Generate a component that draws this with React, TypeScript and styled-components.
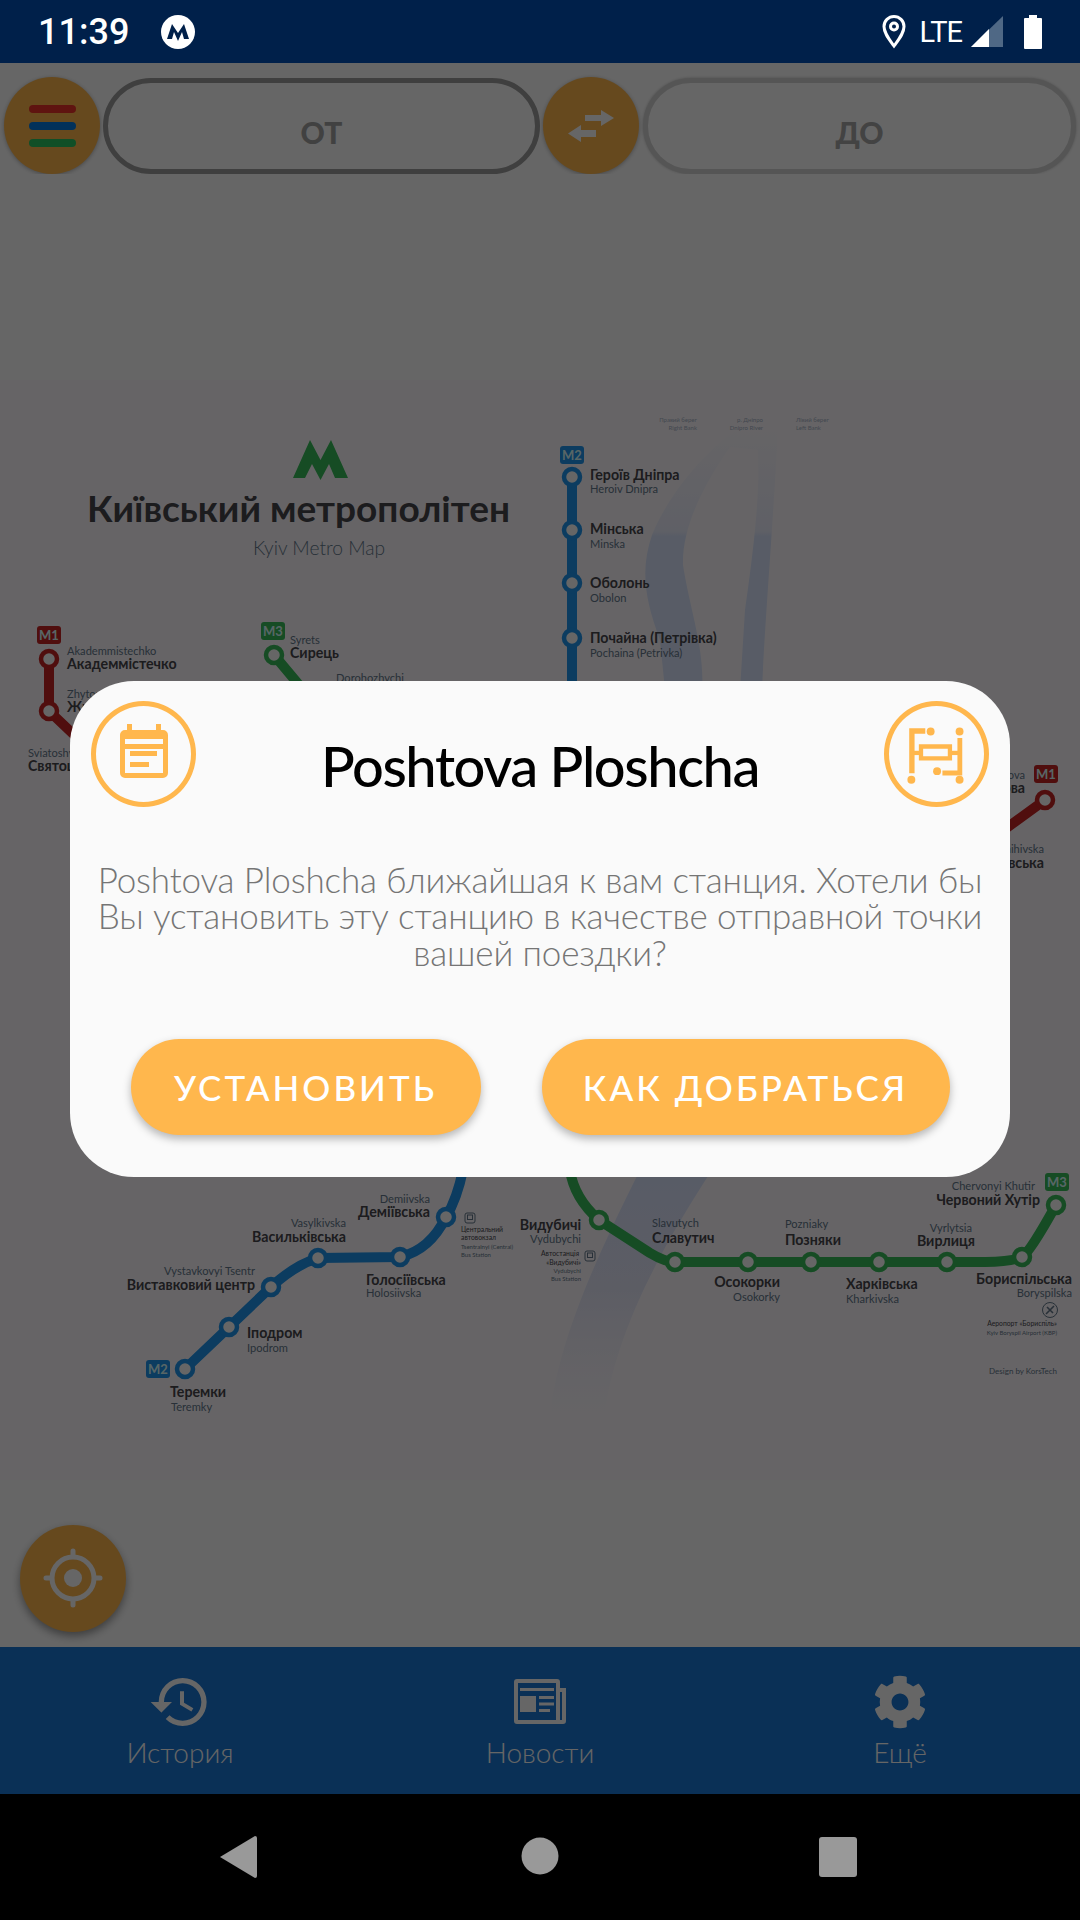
import React from "react";
import styled, { createGlobalStyle } from "styled-components";
import { MdHistory } from "react-icons/md";
import { FaCog } from "react-icons/fa";

const Global = createGlobalStyle`
  html, body { margin: 0; padding: 0; width: 1080px; height: 1920px; overflow: hidden; background: #000; }
  * { box-sizing: border-box; }
`;

const FONT = `Lato, "Noto Sans", "Liberation Sans", sans-serif`;

const Page = styled.div`
  width: 1080px; height: 1920px; display: flex; flex-direction: column; font-family: ${FONT};
`;
const StatusBar = styled.div`
  height: 63px; flex: none; background: #00204a; color: #fff; display: flex; align-items: center; padding: 0 38px 0 38px;
`;
const Clock = styled.span`
  font-family: Roboto, sans-serif; font-size: 36px; font-weight: 500; width: 123px;
`;
const StatusRight = styled.div`
  margin-left: auto; display: flex; align-items: center;
`;
const Lte = styled.span`
  font-family: Roboto, sans-serif; font-size: 29px; letter-spacing: -1px; margin: 0 9px 0 13px;
`;
const Content = styled.div`
  position: relative; flex: 1; display: flex; flex-direction: column; min-height: 0;
`;
const Main = styled.div`
  position: relative; flex: 1; background: #fff; display: flex; flex-direction: column; min-height: 0;
`;
const Toolbar = styled.div`
  flex: none; display: flex; align-items: center; padding: 14px 0 0 4px; height: 111px;
`;
const RoundButton = styled.button`
  flex: none; width: 96px; height: 97px; border: none; padding: 0; border-radius: 50%; background: #ffb74d;
  display: flex; flex-direction: column; align-items: center; justify-content: center; gap: 9px;
  box-shadow: 0 1px 4px rgba(0,0,0,.3);
`;
const MenuBar = styled.span<{ $c: string }>`
  width: 47px; height: 8px; border-radius: 4px; background: ${p => p.$c};
`;
const RouteField = styled.div<{ $w: number; $ml: number; $border: string; $color: string }>`
  flex: none; width: ${p => p.$w}px; height: 96px; margin-left: ${p => p.$ml}px; border-radius: 48px;
  border: 5px solid ${p => p.$border}; color: ${p => p.$color}; font-size: 30px; font-weight: 900;
  display: flex; align-items: center; justify-content: center; padding-top: 12px; background: #fff;
`;
const SoftField = styled(RouteField)`
  box-shadow: 0 0 3px rgba(0,0,0,.25);
`;
const SwapButton = styled(RoundButton)`
  margin-left: 3px;
`;
const MapSvg = styled.svg`
  flex: 1; width: 1080px; min-height: 0; display: block;
`;
const Fab = styled.button`
  position: absolute; left: 20px; bottom: 15px; width: 106px; height: 107px; border-radius: 50%; border: none; padding: 0;
  background: #ffb74d; box-shadow: 0 4px 8px rgba(0,0,0,.4); display: flex; align-items: center; justify-content: center;
`;
const BottomNav = styled.nav`
  flex: none; height: 147px; background: #1978d7; display: grid; grid-template-columns: repeat(3, 1fr);
`;
const NavItem = styled.div`
  display: flex; flex-direction: column; align-items: center; color: #fff; font-size: 28px; font-weight: 300;
`;
const NavIcon = styled.div`
  height: 64px; margin-top: 23px; display: flex; align-items: center; justify-content: center;
`;
const NavLabel = styled.span`
  margin-top: 0; line-height: 36px;
`;
const Scrim = styled.div`
  position: absolute; inset: 0; background: rgba(0,0,0,.6); display: flex; align-items: center; justify-content: center;
`;
const Dialog = styled.div`
  width: 940px; height: 496px; border-radius: 64px; background: #fafafa; padding: 20px 21px 0; display: flex; flex-direction: column;
`;
const DialogHead = styled.div`
  display: flex; align-items: center; justify-content: space-between;
`;
const Badge = styled.div`
  flex: none; width: 105px; height: 106px; border-radius: 50%; border: 5px solid #ffb74d; display: flex; align-items: center; justify-content: center;
`;
const Title = styled.h1`
  margin: 0; padding-top: 24px; font-size: 56px; font-weight: 500; color: #000; letter-spacing: -1.4px; line-height: 66px;
`;
const Body = styled.p`
  margin: 54px 0 0; font-size: 35px; font-weight: 300; color: #757575; line-height: 36.7px; text-align: center; letter-spacing: -0.13px;
`;
const Actions = styled.div`
  display: flex; justify-content: center; gap: 61px; margin-top: 68px;
`;
const Action = styled.button<{ $w: number }>`
  width: ${p => p.$w}px; height: 96px; border: none; border-radius: 48px; background: #ffb74d; color: #fff;
  font-family: ${FONT}; font-size: 35px; font-weight: 500; letter-spacing: 3px; box-shadow: 0 4px 8px rgba(0,0,0,.28); padding: 0;
`;
const SystemNav = styled.div`
  flex: none; height: 126px; background: #000; display: grid; grid-template-columns: 1fr; align-items: center;
`;
const SysSvg = styled.svg`
  width: 1080px; height: 126px; display: block;
`;

const Name = styled.text`
  font-family: ${FONT}; font-size: 14.2px; font-weight: 700; fill: #48464d;
`;
const Sub = styled.text`
  font-family: ${FONT}; font-size: 11.1px; font-weight: 400; fill: #64788c;
`;
const Tiny = styled.text<{ $size: number; $fill: string }>`
  font-family: ${FONT}; font-size: ${p => p.$size}px; font-weight: 400; fill: ${p => p.$fill};
`;
const MapTitle = styled.text`
  font-family: ${FONT}; font-size: 37px; font-weight: 700; fill: #48464d;
`;
const MapSubtitle = styled.text`
  font-family: ${FONT}; font-size: 19.2px; font-weight: 300; fill: #64788c;
`;
const LineBadgeText = styled.text`
  font-family: ${FONT}; font-size: 13px; font-weight: 700; fill: #dff;
`;

type L = [string, number, number, ("start" | "end")?];
const names: L[] = [
  ["Героїв Дніпра", 590, 480], ["Мінська", 590, 534], ["Оболонь", 590, 588], ["Почайна (Петрівка)", 590, 643],
  ["Академмістечко", 67, 669], ["Житомирська", 67, 712], ["Святошин", 28, 771], ["Сирець", 290, 658],
  ["Лісова", 1025, 793, "end"], ["Чернігівська", 1044, 868, "end"],
  ["Теремки", 170, 1397], ["Іподром", 247, 1338], ["Виставковий центр", 255, 1290, "end"], ["Васильківська", 346, 1242, "end"],
  ["Голосіївська", 366, 1285], ["Деміївська", 430, 1217, "end"], ["Видубичі", 581, 1230, "end"],
  ["Славутич", 652, 1243], ["Осокорки", 780, 1287, "end"], ["Позняки", 785, 1245], ["Харківська", 846, 1289],
  ["Вирлиця", 975, 1246, "end"], ["Бориспільська", 1072, 1284, "end"], ["Червоний Хутір", 1040, 1205, "end"],
];
const subs: L[] = [
  ["Heroiv Dnipra", 590, 493], ["Minska", 590, 548], ["Obolon", 590, 602], ["Pochaina (Petrivka)", 590, 657],
  ["Akademmistechko", 67, 655], ["Zhytomyrska", 67, 698], ["Sviatoshyn", 28, 757], ["Syrets", 290, 644], ["Dorohozhychi", 336, 682],
  ["Lisova", 1025, 779, "end"], ["Chernihivska", 1044, 853, "end"],
  ["Teremky", 171, 1411], ["Ipodrom", 247, 1352], ["Vystavkovyi Tsentr", 255, 1275, "end"], ["Vasylkivska", 346, 1227, "end"],
  ["Holosiivska", 366, 1297], ["Demiivska", 430, 1203, "end"], ["Vydubychi", 581, 1243, "end"],
  ["Slavutych", 652, 1227], ["Osokorky", 780, 1301, "end"], ["Pozniaky", 785, 1228], ["Kharkivska", 846, 1303],
  ["Vyrlytsia", 972, 1232, "end"], ["Boryspilska", 1072, 1297, "end"], ["Chervonyi Khutir", 1035, 1190, "end"],
];
const tinyDark: L[] = [
  ["Центральний", 461, 1232], ["автовокзал", 461, 1240], ["Автостанція", 579, 1256, "end"], ["«Видубичі»", 581, 1265, "end"],
  ["Аеропорт «Бориспіль»", 1057, 1326, "end"],
];
const tinyLight: L[] = [
  ["Tsentralnyi (Central)", 461, 1249], ["Bus Station", 461, 1257], ["Vydubychi", 581, 1273, "end"], ["Bus Station", 581, 1281, "end"],
  ["Kyiv Boryspil Airport (KBP)", 1057, 1335, "end"],
];
const riverLabels: L[] = [
  ["Правий берег", 697, 422, "end"], ["Right Bank", 697, 430, "end"], ["р. Дніпро", 763, 422, "end"], ["Dnipro River", 763, 430, "end"],
  ["Лівий берег", 796, 422], ["Left Bank", 796, 430],
];

const BLUE = "#1e96f0", GREEN = "#37be5a", RED = "#c82323";
const st = {
  blue: [[572, 477], [572, 530], [572, 583], [572, 638], [185, 1369], [229, 1327], [271, 1287], [318, 1258], [400, 1257], [446, 1217]],
  green: [[274, 655], [599, 1220], [675, 1262], [748, 1262], [811, 1262], [879, 1262], [947, 1262], [1022, 1257], [1056, 1205]],
  red: [[49, 659], [49, 711], [1045, 800]],
};

const MapBadge = ({ x, y, c, t }: { x: number; y: number; c: string; t: string }) => (
  <g>
    <rect x={x} y={y} width={24} height={18} rx={3} fill={c} />
    <LineBadgeText x={x + 12} y={y + 14} textAnchor="middle">{t}</LineBadgeText>
  </g>
);
const Bus = ({ x, y }: { x: number; y: number }) => (
  <g fill="none" stroke="#64788c" strokeWidth={1}>
    <rect x={x - 5} y={y - 5} width={10} height={10} rx={2} />
    <rect x={x - 2.5} y={y - 3} width={5} height={4.5} />
  </g>
);

const MetroMap = () => (
  <MapSvg viewBox="0 174 1080 1473" preserveAspectRatio="none">
    <defs>
      <linearGradient id="riverTop" x1="0" y1="0" x2="0" y2="1">
        <stop offset="0" stopColor="#e8ecff" stopOpacity="0" />
        <stop offset="0.4" stopColor="#e8ecff" stopOpacity="0.75" />
        <stop offset="0.42" stopColor="#dce6ff" />
        <stop offset="1" stopColor="#dce6ff" />
      </linearGradient>
      <linearGradient id="riverBottom" x1="0" y1="0" x2="0" y2="1">
        <stop offset="0" stopColor="#dce6ff" />
        <stop offset="0.45" stopColor="#e6e8fb" />
        <stop offset="1" stopColor="#f9f4fd" stopOpacity="0" />
      </linearGradient>
    </defs>
    <rect x="0" y="174" width="1080" height="1473" fill="#ffffff" />
    <rect x="0" y="380" width="1080" height="1100" fill="#fffbff" />
    <path fill="url(#riverTop)" d="M745 425 C715 440 670 490 652 535 C640 570 645 600 660 640 L665 690 L702 690 C705 650 690 610 683 565 C682 530 700 490 730 447 L758 450 C760 490 755 540 745 610 L740 690 L762 690 C765 620 772 540 778 430 Z" />
    <path fill="url(#riverBottom)" d="M640 1170 C590 1270 555 1350 548 1430 L603 1430 C610 1340 660 1250 712 1170 Z" />

    <g fill="#37be5a">
      <polygon points="293,478 310,440 320.5,460 331,440 348,478 335,478 329,464 320.5,480 312,464 305,478" />
    </g>
    <MapTitle x={87} y={522}>Київський метрополітен</MapTitle>
    <MapSubtitle x={319} y={555} textAnchor="middle">Kyiv Metro Map</MapSubtitle>

    <g fill="none" strokeWidth={10} strokeLinecap="round" strokeLinejoin="round">
      <path stroke={BLUE} d="M572 477 L572 700" />
      <path stroke={BLUE} d="M463 1170 Q457 1199 446 1217 Q430 1250 400 1257 L318 1258 Q295 1265 271 1287 L185 1369" />
      <path stroke={GREEN} d="M274 655 L320 710" />
      <path stroke={GREEN} d="M570 1170 Q574 1198 599 1220 L650 1253 Q665 1262 675 1262 L985 1262 Q1010 1262 1022 1257 Q1030 1252 1056 1205" />
      <path stroke={RED} d="M49 659 L49 711 L90 750" />
      <path stroke={RED} d="M1045 800 L990 840" />
    </g>
    <g stroke={BLUE} strokeWidth={4.5} fill="#fff">{st.blue.map(([x, y], i) => <circle key={i} cx={x} cy={y} r={8} />)}</g>
    <g stroke={GREEN} strokeWidth={4.5} fill="#fff">{st.green.map(([x, y], i) => <circle key={i} cx={x} cy={y} r={8} />)}</g>
    <g stroke={RED} strokeWidth={4.5} fill="#fff">{st.red.map(([x, y], i) => <circle key={i} cx={x} cy={y} r={8} />)}</g>

    <MapBadge x={560} y={446} c={BLUE} t="M2" />
    <MapBadge x={146} y={1360} c={BLUE} t="M2" />
    <MapBadge x={37} y={626} c={RED} t="M1" />
    <MapBadge x={1034} y={765} c={RED} t="M1" />
    <MapBadge x={261} y={622} c={GREEN} t="M3" />
    <MapBadge x={1045} y={1173} c={GREEN} t="M3" />

    {names.map(([t, x, y, a], i) => <Name key={i} x={x} y={y} textAnchor={a ?? "start"}>{t}</Name>)}
    {subs.map(([t, x, y, a], i) => <Sub key={i} x={x} y={y} textAnchor={a ?? "start"}>{t}</Sub>)}
    {tinyDark.map(([t, x, y, a], i) => <Tiny $size={6.8} $fill="#48464d" key={i} x={x} y={y} textAnchor={a ?? "start"}>{t}</Tiny>)}
    {tinyLight.map(([t, x, y, a], i) => <Tiny $size={6} $fill="#64788c" key={i} x={x} y={y} textAnchor={a ?? "start"}>{t}</Tiny>)}
    {riverLabels.map(([t, x, y, a], i) => <Tiny $size={6} $fill="#a9b4c8" key={i} x={x} y={y} textAnchor={a ?? "start"}>{t}</Tiny>)}
    <Tiny $size={8} $fill="#64788c" x={1057} y={1374} textAnchor="end">Design by KorsTech</Tiny>
    <Bus x={470} y={1218} />
    <Bus x={590} y={1256} />
    <g fill="none" stroke="#64788c" strokeWidth={1}>
      <circle cx={1050} cy={1310} r={7.5} />
      <path d="M1046 1314 L1054 1306 M1047 1307 L1053 1313" strokeWidth={1.6} />
    </g>
  </MapSvg>
);

const Logo = () => (
  <svg width="34" height="34" viewBox="0 0 34 34" style={{ flex: "none" }}>
    <circle cx="17" cy="17" r="17" fill="#fff" />
    <polygon points="6,24 11,9 17,18 23,9 28,24 23,24 21,17 17,26 13,17 11,24" fill="#00204a" />
  </svg>
);

const SwapIcon = () => (
  <svg width="96" height="97" viewBox="0 0 96 97" fill="#fff">
    <path d="M42 38 H58 V33 L71 41 L58 49 V44 H42 Z" />
    <path d="M53 53 H38 V48 L25 56.5 L38 65 V60 H53 Z" />
  </svg>
);

const CalendarIcon = () => (
  <svg width="50" height="60" viewBox="0 0 50 60" fill="#ffb74d">
    <rect x="8" y="0" width="5" height="8" />
    <rect x="37" y="0" width="5" height="8" />
    <path fillRule="evenodd" d="M6 6 H44 A5 5 0 0 1 49 11 V49 A5 5 0 0 1 44 54 H6 A5 5 0 0 1 1 49 V11 A5 5 0 0 1 6 6 Z M6 15 V20 H44 V15 Z M6 25 V49 H44 V25 Z" />
    <rect x="11" y="27" width="27" height="5" />
    <rect x="11" y="38" width="19" height="5" />
  </svg>
);

const CircuitIcon = () => (
  <svg width="60" height="60" viewBox="910 724 54 56" fill="#ffb74d">
    <path d="M912 728 H927 V733 H917 V770 H912 Z" />
    <path d="M957 737 H961.5 V772 H943 V767.5 H957 Z" />
    <circle cx="932" cy="731" r="3.7" /><circle cx="959" cy="731" r="3.7" />
    <circle cx="938" cy="768" r="3.7" /><circle cx="914" cy="776" r="3.7" /><circle cx="959" cy="776" r="3.7" />
    <path fillRule="evenodd" d="M921 743 H952 V758 H921 Z M925 747 V754 H948 V747 Z" />
    <rect x="916" y="749" width="6" height="4" /><rect x="951" y="749" width="7" height="4" />
  </svg>
);

const NewsIcon = () => (
  <svg width="52" height="46" viewBox="514 1680 52 46" fill="#fff">
    <path fillRule="evenodd" d="M517 1680 H557 A3 3 0 0 1 560 1683 V1689 H566 V1722 A3 3 0 0 1 563 1725 H517 A3 3 0 0 1 514 1722 V1683 A3 3 0 0 1 517 1680 Z M518 1684 V1721 H556 V1684 Z M560 1693 V1721 H562 V1693 Z" />
    <rect x="520" y="1689" width="34" height="3" />
    <rect x="520" y="1697" width="16" height="16" />
    <rect x="539" y="1697" width="15" height="3" />
    <rect x="539" y="1703.5" width="15" height="3" />
    <rect x="539" y="1710" width="11" height="3" />
  </svg>
);

const TargetIcon = () => (
  <svg width="106" height="107" viewBox="0 0 106 107" fill="none" stroke="#fff">
    <circle cx="53" cy="53" r="21" strokeWidth="5" />
    <circle cx="53" cy="53" r="9" fill="#fff" stroke="none" />
    <path strokeWidth="5" strokeLinecap="round" d="M53 26 V31 M53 75 V80 M26 53 H31 M75 53 H80" />
  </svg>
);

export default function App() {
  return (
    <Page>
      <Global />
      <StatusBar>
        <Clock>11:39</Clock>
        <Logo />
        <StatusRight>
          <svg width="24" height="34" viewBox="0 0 24 34" fill="none" stroke="#fff" strokeWidth="3">
            <path d="M12 31 C7 24 2 18 2 11.5 A10 10 0 0 1 22 11.5 C22 18 17 24 12 31 Z" />
            <circle cx="12" cy="11.5" r="3.5" />
          </svg>
          <Lte>LTE</Lte>
          <svg width="32" height="32" viewBox="0 0 32 32" style={{ marginRight: 21 }}>
            <polygon points="0,31 32,31 32,0" fill="#4f6885" />
            <polygon points="0,31 18,31 18,13" fill="#fff" />
          </svg>
          <svg width="18" height="34" viewBox="0 0 18 34" fill="#fff">
            <path d="M5 0 H13 V3 H17 A1 1 0 0 1 18 4 V33 A1 1 0 0 1 17 34 H1 A1 1 0 0 1 0 33 V4 A1 1 0 0 1 1 3 H5 Z" />
          </svg>
        </StatusRight>
      </StatusBar>
      <Content>
        <Main>
          <Toolbar>
            <RoundButton>
              <MenuBar $c="#ed3228" />
              <MenuBar $c="#057ae1" />
              <MenuBar $c="#2ac561" />
            </RoundButton>
            <RouteField $w={437} $ml={3} $border="#9e9e9e" $color="#a4a4a4">ОТ</RouteField>
            <SwapButton><SwapIcon /></SwapButton>
            <SoftField $w={433} $ml={4} $border="#d5d5d5" $color="#a8a8a8">ДО</SoftField>
          </Toolbar>
          <MetroMap />
          <Fab><TargetIcon /></Fab>
        </Main>
        <BottomNav>
          <NavItem><NavIcon><MdHistory size={64} /></NavIcon><NavLabel>История</NavLabel></NavItem>
          <NavItem><NavIcon><NewsIcon /></NavIcon><NavLabel>Новости</NavLabel></NavItem>
          <NavItem><NavIcon><FaCog size={54} /></NavIcon><NavLabel>Ещё</NavLabel></NavItem>
        </BottomNav>
        <Scrim>
          <Dialog>
            <DialogHead>
              <Badge><CalendarIcon /></Badge>
              <Title>Poshtova Ploshcha</Title>
              <Badge><CircuitIcon /></Badge>
            </DialogHead>
            <Body>
              Poshtova Ploshcha ближайшая к вам станция. Хотели бы<br />
              Вы установить эту станцию в качестве отправной точки<br />
              вашей поездки?
            </Body>
            <Actions>
              <Action $w={350}>УСТАНОВИТЬ</Action>
              <Action $w={408}>КАК ДОБРАТЬСЯ</Action>
            </Actions>
          </Dialog>
        </Scrim>
      </Content>
      <SystemNav>
        <SysSvg viewBox="0 1794 1080 126" fill="#999">
          <path d="M220 1857 L255 1836 Q257 1836 257 1838 V1876 Q257 1878 255 1878 Z" />
          <circle cx="540" cy="1856" r="18.5" />
          <rect x="819" y="1837" width="38" height="40" rx="3" />
        </SysSvg>
      </SystemNav>
    </Page>
  );
}
